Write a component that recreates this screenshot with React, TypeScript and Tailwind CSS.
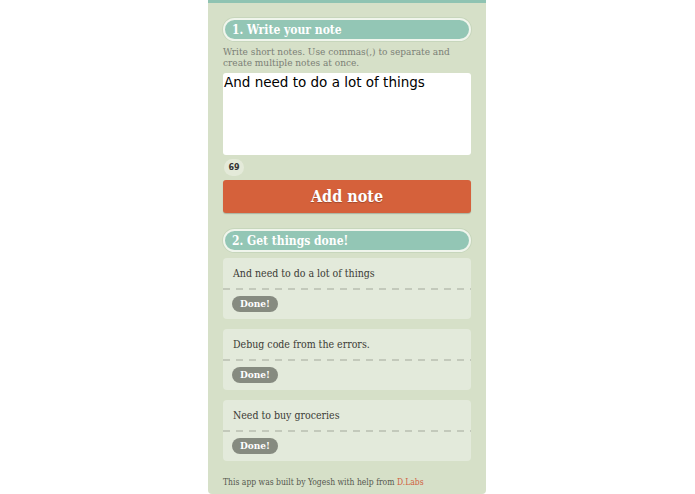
const slab = { fontFamily: '"DejaVu Serif Condensed", "DejaVu Serif", serif' };

const notes = [
    "And need to do a lot of things",
    "Debug code from the errors.",
    "Need to buy groceries",
];

function SectionTitle({ children }: { children: string }) {
    return (
        <div
            className="h-[23px] rounded-full bg-[#93c6b5] border-2 border-[#f0f5ec] px-[7px] flex items-center text-white text-[12px] font-bold shadow-[0_0_0_1px_#c7d6bc]"
            style={slab}
        >
            {children}
        </div>
    );
}

function NoteCard({ text }: { text: string }) {
    return (
        <div className="h-[61px] rounded-[4px] bg-[#e3eadb] flex flex-col">
            <div className="h-[30px] shrink-0 px-[10px] pt-[8px] text-[10.5px] text-[#3b3b36]" style={slab}>
                {text}
            </div>
            <div className="h-[2px] shrink-0 bg-[repeating-linear-gradient(90deg,#c3c9bb_0px,#c3c9bb_7px,transparent_7px,transparent_13px)]" />
            <div className="flex px-[9px] pt-[6px]">
                <button
                    className="h-[16px] px-[8px] rounded-full bg-[#868b80] text-white text-[10px] font-bold leading-none"
                    style={slab}
                >
                    Done!
                </button>
            </div>
        </div>
    );
}

export default function App() {
    return (
        <div className="w-[695px] h-[494px] bg-white flex justify-center overflow-hidden">
            <div className="w-[278px] h-[494px] ml-[-1px] bg-[#d6e0c8] border-t-[3px] border-[#8fc3b2] rounded-b-[4px] px-[15px] pt-[15px] flex flex-col">
                <SectionTitle>1. Write your note</SectionTitle>
                <p className="mt-[5px] text-[10px] leading-[11px] text-[#7b7f76]" style={slab}>
                    Write short notes. Use commas(,) to separate and create multiple notes at once.
                </p>
                <div
                    className="mt-[5px] h-[82px] rounded-[3px] bg-white px-[1px] pt-[1px] text-[13.5px] text-black leading-[16px]"
                    style={{ fontFamily: '"DejaVu Sans", sans-serif' }}
                >
                    And need to do a lot of things
                </div>
                <div className="mt-[4px] ml-[1px] w-[20px] h-[17px] rounded-full bg-[#e4ead9] flex items-center justify-center text-[8px] font-bold text-[#333]" style={{ fontFamily: '"DejaVu Sans", sans-serif' }}>
                    69
                </div>
                <button
                    className="mt-[4px] h-[33px] rounded-[3px] bg-[#d5613b] text-white text-[16px] font-bold shadow-[0_1px_1px_rgba(0,0,0,0.2)] [text-shadow:0_1px_1px_rgba(0,0,0,0.25)]"
                    style={slab}
                >
                    Add note
                </button>
                <div className="mt-[16px]">
                    <SectionTitle>2. Get things done!</SectionTitle>
                </div>
                <div className="mt-[6px] flex flex-col gap-[10px]">
                    {notes.map((n) => (
                        <NoteCard key={n} text={n} />
                    ))}
                </div>
                <p className="mt-[15px] text-[8.5px] text-[#55584f]" style={slab}>
                    This app was built by Yogesh with help from <span className="text-[#d0603f]">D.Labs</span>
                </p>
            </div>
        </div>
    );
}
